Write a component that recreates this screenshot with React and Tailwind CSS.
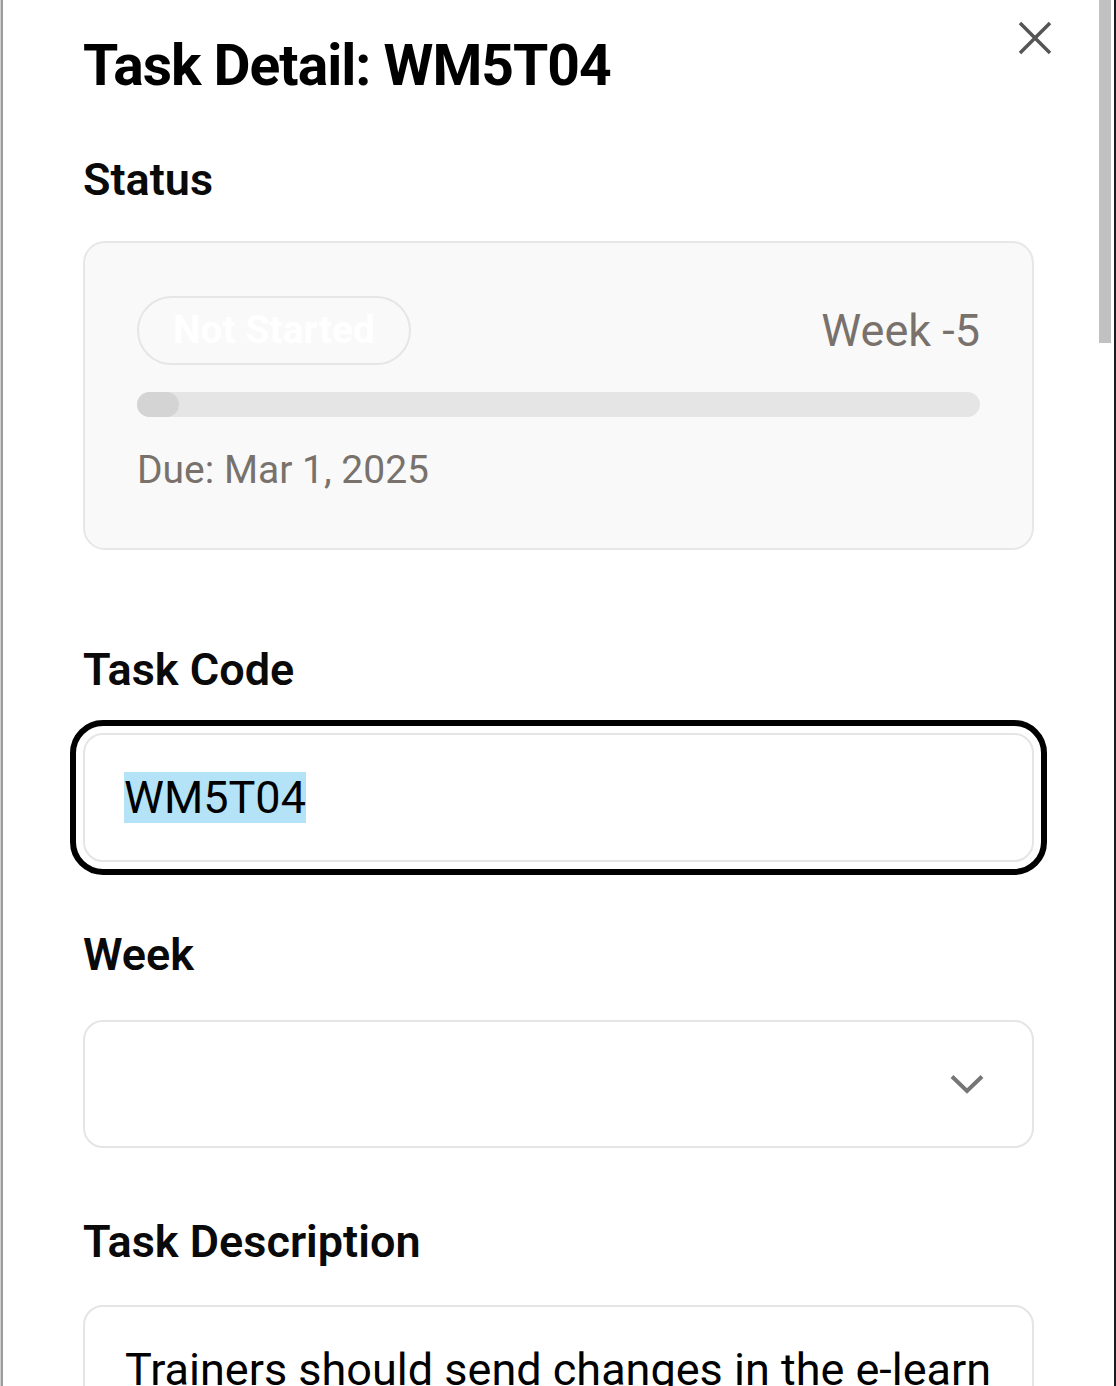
const labelClass =
  "text-[45px] font-semibold leading-[54px] text-[#0a0a0a]";

function CloseIcon() {
  return (
    <svg viewBox="0 0 40 40" className="h-[40px] w-[40px]" fill="none" stroke="#555555" strokeWidth="3.5">
      <path d="M5 5 35 35M35 5 5 35" />
    </svg>
  );
}

function ChevronDown() {
  return (
    <svg viewBox="0 0 40 20" className="h-[20px] w-[40px]" fill="none" stroke="#767676" strokeWidth="4">
      <path d="M5 2.5 20 17 35 2.5" />
    </svg>
  );
}

function StatusCard() {
  return (
    <div className="mt-[34px] rounded-[22px] border-2 border-[#e7e7e7] bg-[#f9f9f9] px-[52px] pt-[53px] pb-[54px]">
      <div className="flex items-center justify-between">
        <span className="flex h-[69px] items-center rounded-full border-2 border-[#e6e6e6] px-[34px] text-[39px] font-bold text-white">
          Not Started
        </span>
        <span className="text-[45px] leading-[54px] text-[#78716c]">Week -5</span>
      </div>
      <div className="mt-[27px] h-[25px] w-full rounded-full bg-[#e5e5e5]">
        <div className="h-full w-[42px] rounded-full bg-[#d4d4d4]" />
      </div>
      <p className="mt-[29px] text-[39px] leading-[48px] text-[#78716c]">Due: Mar 1, 2025</p>
    </div>
  );
}

export default function App() {
  return (
    <div className="flex h-[1386px] overflow-hidden bg-white font-['Roboto','Liberation_Sans',sans-serif]">
      <div className="w-[3px] border-l border-[#cfcfcf] bg-[#9c9c9c]" />

      <main className="flex-1 pl-[80px]">
        <div className="w-[951px]">
          <header className="flex items-start justify-between pt-[18px]">
            <h1 className="mt-[15px] text-[57px] font-bold leading-[66px] tracking-[-1px] text-black">
              Task Detail: WM5T04
            </h1>
            <button type="button" className="-mr-[21px] flex h-[40px] w-[40px] items-center justify-center">
              <CloseIcon />
            </button>
          </header>

          <h2 className={`mt-[54px] ${labelClass}`}>Status</h2>
          <StatusCard />

          <h2 className={`mt-[93px] ${labelClass}`}>Task Code</h2>
          <div className="mt-[36px] flex h-[129px] items-center rounded-[20px] border-2 border-[#e5e5e5] pl-[39px] outline-[6px] outline-offset-[7px] outline-black">
            <span className="bg-[#b4e2f6] text-[45px] leading-[51px] text-black">WM5T04</span>
          </div>

          <h2 className={`mt-[66px] ${labelClass}`}>Week</h2>
          <div className="mt-[38px] flex h-[128px] items-center justify-end rounded-[20px] border-2 border-[#e5e5e5] pr-[45px]">
            <ChevronDown />
          </div>

          <h2 className={`mt-[67px] ${labelClass}`}>Task Description</h2>
          <div className="mt-[36px] h-[200px] rounded-[20px] border-2 border-[#e5e5e5] pt-[36px] pl-[40px] pr-[39px]">
            <p className="overflow-hidden whitespace-nowrap text-[45px] leading-[54px] text-black">
              Trainers should send changes in the e-learning module to the admin team
            </p>
          </div>
        </div>
      </main>

      <div className="w-[12px]">
        <div className="h-[343px] bg-[#c1c1c1]" />
      </div>
      <div className="w-[3px]" />
      <div className="w-[2px] bg-[#1c1c24]" />
    </div>
  );
}
